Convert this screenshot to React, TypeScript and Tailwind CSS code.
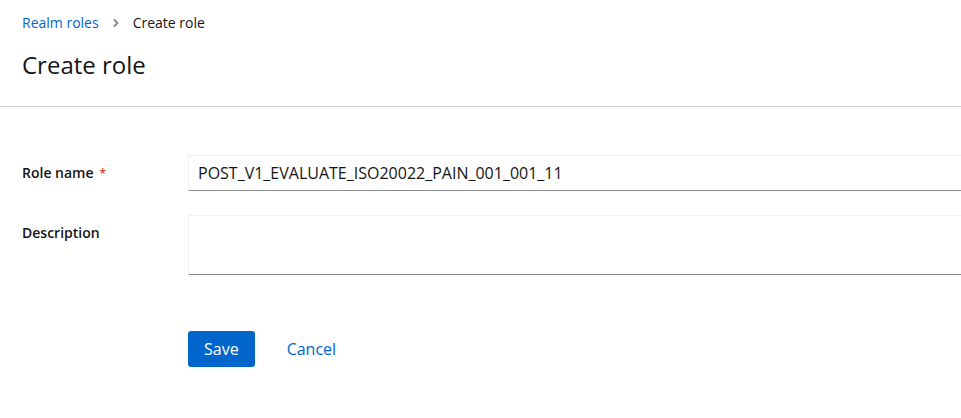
import { ChevronRight } from "lucide-react"

export default function App() {
  return (
    <div className="w-[961px] h-[418px] overflow-hidden bg-white text-[#151515] font-['Open_Sans',sans-serif]">
      {/* Page header */}
      <section className="px-[22px] pt-[13px] pb-[26px] border-b border-[#d2d2d2]">
        <nav className="flex items-center gap-[11px] text-[14px] leading-[20px]">
          <a className="text-[#0066cc]">Realm roles</a>
          <ChevronRight className="w-[12px] h-[12px] text-[#8a8d90]" strokeWidth={4} />
          <span>Create role</span>
        </nav>
        <h1 className="mt-[17px] text-[24px] leading-[30px]">Create role</h1>
      </section>

      {/* Form */}
      <form className="px-[22px] pt-[48px] flex flex-col">
        <div className="flex">
          <label className="w-[166px] shrink-0 pt-[8px] text-[14px] leading-[20px] font-semibold">
            Role name<span className="text-[#c9190b] ml-[6px] text-[12px] font-normal">*</span>
          </label>
          <input
            className="w-[800px] shrink-0 h-[36px] px-[9px] text-[16px] border border-[#f0f0f0] border-b-[#8a8d90] outline-none"
            defaultValue="POST_V1_EVALUATE_ISO20022_PAIN_001_001_11"
          />
        </div>
        <div className="flex mt-[24px]">
          <label className="w-[166px] shrink-0 pt-[8px] text-[14px] leading-[20px] font-semibold">Description</label>
          <textarea className="w-[800px] shrink-0 h-[60px] px-[9px] py-[6px] text-[16px] border border-[#f0f0f0] border-b-[#8a8d90] outline-none resize-none" />
        </div>
        <div className="flex items-center mt-[56px] ml-[166px] gap-[16px]">
          <button type="button" className="h-[36px] px-[16px] rounded-[3px] bg-[#0066cc] text-white text-[16px]">
            Save
          </button>
          <button type="button" className="h-[36px] px-[16px] text-[#0066cc] text-[16px]">
            Cancel
          </button>
        </div>
      </form>
    </div>
  )
}
